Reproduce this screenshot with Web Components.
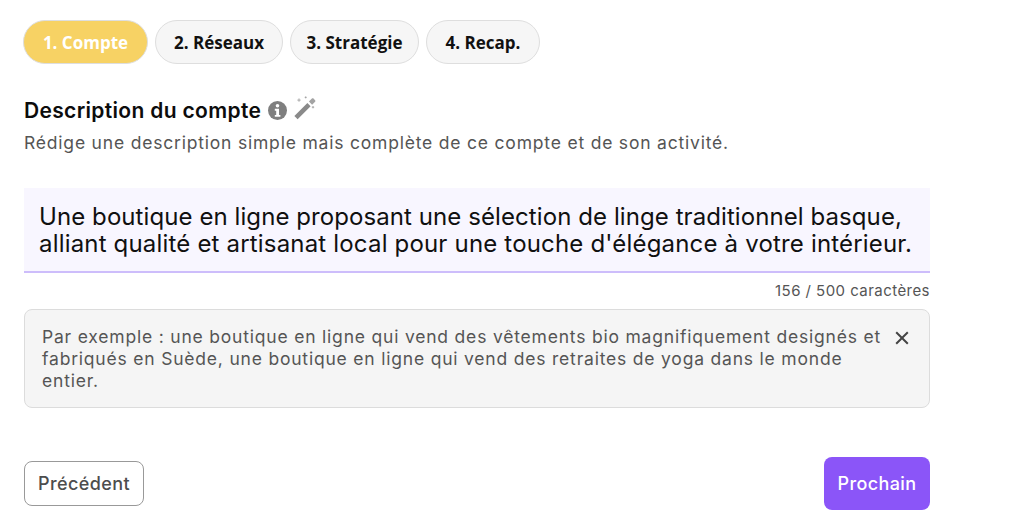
<!DOCTYPE html>
<html lang="fr">
<head>
<meta charset="utf-8">
<title>Description du compte</title>
<style>
  html, body { margin: 0; background: #fff; }
  body { font-family: Inter, "Open Sans", sans-serif; }
  /* line widths differ from the original font, so each wrapped line gets its own tracking */
  .l1 { letter-spacing: 0.08px; }
  .l2 { letter-spacing: 0.18px; }
</style>
</head>
<body>
<account-step>
  <step-tabs slot="tabs">
    <step-tab active>1. Compte</step-tab>
    <step-tab>2. Réseaux</step-tab>
    <step-tab>3. Stratégie</step-tab>
    <step-tab>4. Recap.</step-tab>
  </step-tabs>
  <section-title slot="title" text="Description du compte">Rédige une description simple mais complète de ce compte et de son activité.</section-title>
  <text-field slot="field" count="156 / 500 caractères"><span class="l1">Une boutique en ligne proposant une sélection de linge traditionnel basque,</span><br><span class="l2">alliant qualité et artisanat local pour une touche d'élégance à votre intérieur.</span></text-field>
  <hint-box slot="hint">Par exemple : une boutique en ligne qui vend des vêtements bio magnifiquement designés et<br>fabriqués en Suède, une boutique en ligne qui vend des retraites de yoga dans le monde<br>entier.</hint-box>
  <nav-button slot="prev" kind="ghost">Précédent</nav-button>
  <nav-button slot="next" kind="primary">Prochain</nav-button>
</account-step>

<script>
class AccountStep extends HTMLElement {
  constructor() {
    super();
    this.attachShadow({ mode: "open" });
    this.shadowRoot.innerHTML = `
      <style>
        :host { display: block; width: 906px; height: 507px; padding: 20px 0 0 24px; overflow: hidden; }
        .title { margin-top: 34px; }
        .field { margin-top: 33px; }
        .hint { margin-top: 8px; }
        .nav { display: flex; justify-content: space-between; align-items: center; margin-top: 49px; }
      </style>
      <slot name="tabs"></slot>
      <div class="title"><slot name="title"></slot></div>
      <div class="field"><slot name="field"></slot></div>
      <div class="hint"><slot name="hint"></slot></div>
      <div class="nav"><slot name="prev"></slot><slot name="next"></slot></div>
    `;
  }
}

class StepTabs extends HTMLElement {
  constructor() {
    super();
    this.attachShadow({ mode: "open" });
    this.shadowRoot.innerHTML = `
      <style>
        :host { display: grid; grid-template-columns: 125px 128px 129px 114px; gap: 7px; margin-left: -1px; }
      </style>
      <slot></slot>
    `;
  }
}

class StepTab extends HTMLElement {
  constructor() {
    super();
    this.attachShadow({ mode: "open" });
    this.shadowRoot.innerHTML = `
      <style>
        :host {
          display: flex;
          align-items: center;
          justify-content: center;
          height: 44px;
          box-sizing: border-box;
          border: 1.5px solid #dedede;
          border-radius: 22px;
          background: #f6f6f6;
          color: #111;
          font: 700 17px "Open Sans", sans-serif;
          white-space: nowrap;
        }
        :host([active]) { background: #f7d264; color: #fff; }
      </style>
      <slot></slot>
    `;
  }
}

class SectionTitle extends HTMLElement {
  constructor() {
    super();
    this.attachShadow({ mode: "open" });
  }

  connectedCallback() {
    const text = this.getAttribute("text") || "";
    this.shadowRoot.innerHTML = `
      <style>
        :host { display: block; }
        .head { display: flex; align-items: center; height: 24px; gap: 7px; color: #0c0c0c; font-size: 21px; font-weight: 600; letter-spacing: 0.33px; white-space: nowrap; }
        .icons { display: flex; align-items: center; gap: 7px; }
        svg { display: block; overflow: visible; }
        p { margin: 9px 0 0; color: #555; font-size: 17.5px; line-height: 24px; letter-spacing: 0.8px; white-space: nowrap; }
      </style>
      <div class="head">
        <span>${text}</span>
        <span class="icons">
          <svg width="19" height="19" viewBox="0 0 19 19" aria-hidden="true">
            <circle cx="9.5" cy="9.5" r="9.5" fill="#7f7f7f"/>
            <circle cx="9.5" cy="4.8" r="1.8" fill="#fff"/>
            <path d="M6.8 7.8h4.2v6.1h1.4v1.9H6.8v-1.9h1.4V9.7H6.8z" fill="#fff"/>
          </svg>
          <svg width="22" height="22" viewBox="0 0 22 22" aria-hidden="true" style="margin-top:-4px">
            <path d="M13.4 6.1l3.2 3.2-13 13-3.2-3.2z" fill="#8a8a8a"/>
            <path d="M14.9 4.6l3.2 3.2 3-3c.5-.5.5-1.1 0-1.6l-1.6-1.6c-.5-.5-1.1-.5-1.6 0z" fill="#a3a3a3"/>
            <path d="M5 1.4v3.4M3.3 3.1h3.4M11.7-.6v2M10.7.4h2M19 9v2.4M17.8 10.2h2.4" stroke="#9a9a9a" stroke-width=".8"/>
          </svg>
        </span>
      </div>
      <p><slot></slot></p>
    `;
  }
}

class TextField extends HTMLElement {
  constructor() {
    super();
    this.attachShadow({ mode: "open" });
  }

  connectedCallback() {
    const count = this.getAttribute("count") || "";
    this.shadowRoot.innerHTML = `
      <style>
        :host { display: block; }
        .box {
          box-sizing: border-box;
          height: 85px;
          padding: 15px 15px 0;
          background: #f8f6ff;
          border-bottom: 2px solid #cdbdfb;
          color: #101010;
          font-size: 24px;
          line-height: 27px;
          white-space: nowrap;
        }
        .count { margin-top: 8px; text-align: right; color: #555; font-size: 15px; line-height: 20px; letter-spacing: 0.45px; }
      </style>
      <div class="box"><slot></slot></div>
      <div class="count">${count}</div>
    `;
  }
}

class HintBox extends HTMLElement {
  constructor() {
    super();
    this.attachShadow({ mode: "open" });
    this.shadowRoot.innerHTML = `
      <style>
        :host {
          display: flex;
          justify-content: space-between;
          box-sizing: border-box;
          height: 99px;
          padding: 16px 20px 0 17px;
          background: #f5f5f5;
          border: 1.5px solid #dcdcdc;
          border-radius: 8px;
          color: #555;
          font-size: 17.5px;
          line-height: 22px;
          letter-spacing: 0.8px;
          white-space: nowrap;
        }
        svg { display: block; margin-top: 5px; flex: none; }
      </style>
      <div><slot></slot></div>
      <svg width="14" height="14" viewBox="0 0 14 14" aria-hidden="true">
        <path d="M1.2 1.2l11.6 11.6M12.8 1.2 1.2 12.8" stroke="#444" stroke-width="2" fill="none"/>
      </svg>
    `;
  }
}

class NavButton extends HTMLElement {
  constructor() {
    super();
    this.attachShadow({ mode: "open" });
    this.shadowRoot.innerHTML = `
      <style>
        :host {
          display: flex;
          align-items: center;
          justify-content: center;
          box-sizing: border-box;
          border-radius: 8px;
          font-size: 18px;
          font-weight: 500;
          letter-spacing: 0.4px;
        }
        :host([kind="ghost"]) { width: 120px; height: 45px; border: 1.5px solid #999; background: #fff; color: #4d4d4d; }
        :host([kind="primary"]) { width: 106px; height: 53px; background: #8b55f8; color: #fff; }
      </style>
      <slot></slot>
    `;
  }
}

customElements.define("account-step", AccountStep);
customElements.define("step-tabs", StepTabs);
customElements.define("step-tab", StepTab);
customElements.define("section-title", SectionTitle);
customElements.define("text-field", TextField);
customElements.define("hint-box", HintBox);
customElements.define("nav-button", NavButton);
</script>
</body>
</html>
